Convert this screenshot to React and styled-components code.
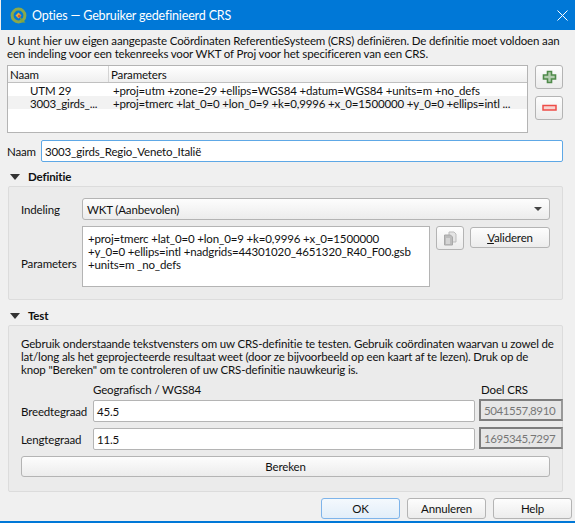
import React from 'react';
import styled, { createGlobalStyle } from 'styled-components';

const GlobalStyle = createGlobalStyle`
  html, body {
    margin: 0;
    padding: 0;
    background: #f0f0f0;
  }
`;

const Window = styled.div`
  width: 575px;
  height: 523px;
  box-sizing: border-box;
  display: flex;
  flex-direction: column;
  overflow: hidden;
  background: #f0f0f0;
  color: #111;
  font-family: Lato, 'Liberation Sans', Arial, sans-serif;
  font-size: 11.5px;
  letter-spacing: -0.15px;
  line-height: 13px;
  border-bottom: 2px solid #0078d7;
`;

const TitleBar = styled.div`
  height: 30px;
  flex: none;
  margin-left: 1px;
  padding-left: 9px;
  display: flex;
  align-items: center;
  background: #0078d7;
  color: #fff;
`;

const TitleText = styled.span`
  margin-left: 5px;
  font-size: 12.5px;
`;

const CloseButton = styled.svg`
  width: 11px;
  height: 11px;
  margin-left: auto;
  margin-right: 7px;
`;

const Content = styled.div`
  flex: 1;
  padding: 4px 12px 0 7px;
  display: flex;
  flex-direction: column;
`;

const Intro = styled.div`
  height: 31px;
  white-space: nowrap;
`;

const ListRow = styled.div`
  display: flex;
  gap: 7px;
`;

const Table = styled.div`
  width: 522px;
  height: 68px;
  box-sizing: border-box;
  border: 1px solid #b4b4b4;
  background: #fff;
  overflow: hidden;
`;

const HeaderRow = styled.div`
  display: grid;
  grid-template-columns: 100px 1fr;
  height: 16px;
  background: linear-gradient(#ffffff, #efefef);
  border-bottom: 1px solid #c0c0c0;
`;

const HeaderCell = styled.div`
  padding: 2px 0 0 2px;
  & + & {
    border-left: 1px solid #d4d4d4;
  }
`;

const DataRow = styled.div`
  display: grid;
  grid-template-columns: 100px 1fr;
  height: 13px;
  white-space: nowrap;
  background: ${p => (p.$alt ? '#f2f2f2' : '#fff')};
`;

const NameCell = styled.div`
  padding: 1px 0 0 22px;
`;

const ParamCell = styled.div`
  padding: 1px 0 0 5px;
`;

const IconColumn = styled.div`
  display: flex;
  flex-direction: column;
  gap: 7px;
`;

const Button = styled.button`
  box-sizing: border-box;
  padding: 0;
  margin: 0;
  display: flex;
  align-items: center;
  justify-content: center;
  border: 1px solid ${p => (p.$primary ? '#7eb4ea' : '#b4b4b4')};
  border-radius: 3px;
  background: ${p => (p.$primary ? 'linear-gradient(#f4f9fd, #e2eef9)' : 'linear-gradient(#fdfdfd, #ececec)')};
  color: #111;
  font: inherit;
  letter-spacing: inherit;
  height: 21px;
`;

const IconButton = styled(Button)`
  width: 28px;
  height: 24px;
`;

const NameRow = styled.div`
  display: flex;
  align-items: center;
  gap: 7px;
  margin-top: 7px;
`;

const NameLabel = styled.span`
  width: 27px;
`;

const NameInput = styled.div`
  flex: 1;
  height: 22px;
  box-sizing: border-box;
  padding-left: 3px;
  display: flex;
  align-items: center;
  background: #fff;
  border: 1px solid #5ea8e6;
  border-radius: 2px;
`;

const SectionHead = styled.div`
  height: 20px;
  box-sizing: border-box;
  padding-left: 3px;
  margin-top: ${p => p.$gap}px;
  display: flex;
  align-items: center;
  gap: 8px;
  font-weight: 700;
`;

const Arrow = styled.span`
  width: 0;
  height: 0;
  border-left: 5px solid transparent;
  border-right: 5px solid transparent;
  border-top: 6px solid #333;
  margin-top: 2px;
`;

const Group = styled.div`
  margin-left: 1px;
  box-sizing: border-box;
  height: ${p => p.$height}px;
  padding: ${p => p.$pad};
  background: #ebebeb;
  border: 1px solid #dcdcdc;
  border-radius: 2px;
  display: flex;
  flex-direction: column;
`;

const FormatRow = styled.div`
  display: grid;
  grid-template-columns: 61px 1fr;
  align-items: center;
`;

const Combo = styled.div`
  height: 22px;
  box-sizing: border-box;
  padding: 0 7px 0 4px;
  display: flex;
  align-items: center;
  justify-content: space-between;
  background: linear-gradient(#fdfdfd, #ececec);
  border: 1px solid #b4b4b4;
  border-radius: 3px;
`;

const ComboArrow = styled.span`
  width: 0;
  height: 0;
  border-left: 4px solid transparent;
  border-right: 4px solid transparent;
  border-top: 4px solid #444;
`;

const ParamsRow = styled.div`
  display: grid;
  grid-template-columns: 61px 348px 120px;
  margin-top: 6px;
`;

const ParamsLabel = styled.div`
  align-self: center;
  padding-top: 14px;
`;

const TextArea = styled.div`
  height: 61px;
  box-sizing: border-box;
  padding: 5px 5px;
  background: #fff;
  border: 1px solid #b4b4b4;
  white-space: nowrap;
`;

const ParamsActions = styled.div`
  margin-left: 6px;
  display: flex;
  align-items: flex-start;
  gap: 6px;
`;

const ValidateButton = styled(Button)`
  width: 80px;
  margin-top: 1px;
`;

const Paragraph = styled.div`
  white-space: nowrap;
`;

const CoordGrid = styled.div`
  display: grid;
  grid-template-columns: 72px 382px 87px;
  grid-auto-rows: auto;
  margin-top: 6px;
`;

const ColumnLabel = styled.div`
  grid-column: ${p => p.$col};
  height: 17px;
  padding: 1px 0 0 ${p => p.$indent}px;
`;

const RowLabel = styled.div`
  align-self: start;
  padding-top: 5px;
`;

const FieldInput = styled.div`
  height: 22px;
  box-sizing: border-box;
  margin-bottom: 6px;
  padding-left: 3px;
  display: flex;
  align-items: center;
  background: #fff;
  border: 1px solid #b4b4b4;
  border-radius: 2px;
`;

const ResultField = styled.div`
  height: 22px;
  width: 84px;
  box-sizing: border-box;
  margin-left: 4px;
  margin-top: -1px;
  padding-left: 3px;
  display: flex;
  align-items: center;
  background: #e6e6e6;
  border: 2px solid #7e7e7e;
  border-right-color: #999;
  color: #777;
  letter-spacing: -0.4px;
`;

const CalcButton = styled(Button)`
  width: 529px;
`;

const Footer = styled.div`
  margin-top: 6px;
  margin-right: -9px;
  display: flex;
  justify-content: flex-end;
  gap: 7px;
`;

const FooterButton = styled(Button)`
  width: 79px;
`;

function QgisLogo() {
  return (
    <svg width="17" height="17" viewBox="0 0 17 17">
      <circle cx="8.5" cy="8.5" r="6.4" fill="none" stroke="#8aa84a" strokeWidth="3" />
      <path d="M8.5 5.5 L11.5 8.5 L8.5 11.5 L5.5 8.5 Z" fill="#e9b03a" />
      <path d="M9 9 L12.5 12.5 L15.5 15.5 L11.5 15.5 Z" fill="#7fa53f" />
      <circle cx="9.3" cy="9.2" r="1.4" fill="#d9503c" />
    </svg>
  );
}

function PlusIcon() {
  return (
    <svg width="15" height="14" viewBox="0 0 15 14">
      <path d="M5.5 1.5h4v3.5h4v4h-4v3.5h-4V9h-4V5h4z" fill="#b4cdb0" stroke="#4f8a4a" strokeWidth="1.6" />
    </svg>
  );
}

function MinusIcon() {
  return (
    <svg width="15" height="8" viewBox="0 0 15 8">
      <rect x="1" y="1.5" width="13" height="4.5" fill="#f7d4d1" stroke="#ee4d48" strokeWidth="1.5" />
    </svg>
  );
}

function CopyIcon() {
  return (
    <svg width="14" height="15" viewBox="0 0 14 15">
      <path d="M6 1h5l2 2v8H6z" fill="#e4e4e4" stroke="#bdbdbd" />
      <path d="M1.5 4h6l2 2v8h-8z" fill="#bcbcbc" stroke="#a8a8a8" />
      <path d="M3 8h4M3 10h4M3 12h4" stroke="#ececec" />
    </svg>
  );
}

export default function App() {
  return (
    <Window>
      <GlobalStyle />
      <TitleBar>
        <QgisLogo />
        <TitleText>Opties — Gebruiker gedefinieerd CRS</TitleText>
        <CloseButton viewBox="0 0 11 11">
          <path d="M.5.5l10 10M10.5.5l-10 10" stroke="#fff" strokeWidth="1" />
        </CloseButton>
      </TitleBar>
      <Content>
        <Intro>
          U kunt hier uw eigen aangepaste Coördinaten ReferentieSysteem (CRS) definiëren. De definitie moet voldoen aan
          <br />
          een indeling voor een tekenreeks voor WKT of Proj voor het specificeren van een CRS.
        </Intro>
        <ListRow>
          <Table>
            <HeaderRow>
              <HeaderCell>Naam</HeaderCell>
              <HeaderCell>Parameters</HeaderCell>
            </HeaderRow>
            <DataRow>
              <NameCell>UTM 29</NameCell>
              <ParamCell>+proj=utm +zone=29 +ellips=WGS84 +datum=WGS84 +units=m +no_defs</ParamCell>
            </DataRow>
            <DataRow $alt>
              <NameCell>3003_girds_...</NameCell>
              <ParamCell>+proj=tmerc +lat_0=0 +lon_0=9 +k=0,9996 +x_0=1500000 +y_0=0 +ellips=intl ...</ParamCell>
            </DataRow>
          </Table>
          <IconColumn>
            <IconButton><PlusIcon /></IconButton>
            <IconButton><MinusIcon /></IconButton>
          </IconColumn>
        </ListRow>
        <NameRow>
          <NameLabel>Naam</NameLabel>
          <NameInput>3003_girds_Regio_Veneto_Italië</NameInput>
        </NameRow>
        <SectionHead $gap={4}><Arrow />Definitie</SectionHead>
        <Group $height={114} $pad="11px 12px 0 12px">
          <FormatRow>
            <span>Indeling</span>
            <Combo>WKT (Aanbevolen)<ComboArrow /></Combo>
          </FormatRow>
          <ParamsRow>
            <ParamsLabel>Parameters</ParamsLabel>
            <TextArea>
              +proj=tmerc +lat_0=0 +lon_0=9 +k=0,9996 +x_0=1500000
              <br />
              +y_0=0 +ellips=intl +nadgrids=44301020_4651320_R40_F00.gsb
              <br />
              +units=m _no_defs
            </TextArea>
            <ParamsActions>
              <IconButton><CopyIcon /></IconButton>
              <ValidateButton><span><u>V</u>alideren</span></ValidateButton>
            </ParamsActions>
          </ParamsRow>
        </Group>
        <SectionHead $gap={5}><Arrow />Test</SectionHead>
        <Group $height={167} $pad="11px 0 0 12px">
          <Paragraph>
            Gebruik onderstaande tekstvensters om uw CRS-definitie te testen. Gebruik coördinaten waarvan u zowel de
            <br />
            lat/long als het geprojecteerde resultaat weet (door ze bijvoorbeeld op een kaart af te lezen). Druk op de
            <br />
            knop "Bereken" om te controleren of uw CRS-definitie nauwkeurig is.
          </Paragraph>
          <CoordGrid>
            <ColumnLabel $col={2} $indent={0}>Geografisch / WGS84</ColumnLabel>
            <ColumnLabel $col={3} $indent={6}>Doel CRS</ColumnLabel>
            <RowLabel>Breedtegraad</RowLabel>
            <FieldInput>45.5</FieldInput>
            <ResultField>5041557,8910</ResultField>
            <RowLabel>Lengtegraad</RowLabel>
            <FieldInput>11.5</FieldInput>
            <ResultField>1695345,7297</ResultField>
          </CoordGrid>
          <CalcButton>Bereken</CalcButton>
        </Group>
        <Footer>
          <FooterButton $primary>OK</FooterButton>
          <FooterButton>Annuleren</FooterButton>
          <FooterButton>Help</FooterButton>
        </Footer>
      </Content>
    </Window>
  );
}
